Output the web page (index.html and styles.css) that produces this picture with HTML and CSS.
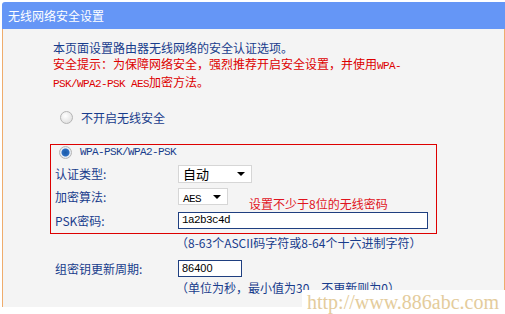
FILE: index.html
```html
<!DOCTYPE html>
<html>
<head>
	<title>无线网络安全设置</title>
	<meta charset="UTF-8">
	<link rel="stylesheet" href="styles.css">
</head>
<body>
	<div class="panel">
		<div class="title">无线网络安全设置</div>
		<div class="content">
			<p class="intro">本页面设置路由器无线网络的安全认证选项。</p>
			<p class="warn">安全提示：为保障网络安全，强烈推荐开启安全设置，并使用<span class="mono">WPA-</span><br><span class="mono">PSK/WPA2-PSK AES</span>加密方法。</p>

			<div class="radio-row off-row"><span class="radio"></span>不开启无线安全</div>

			<div class="wpa-box">
				<div class="radio-row wpa-row"><span class="radio on"></span><span class="mono">WPA-PSK/WPA2-PSK</span></div>
				<div class="field f1">
					<label>认证类型:</label>
					<span class="select sel-auth">自动<i class="caret"></i></span>
				</div>
				<div class="field f2">
					<label>加密算法:</label>
					<span class="select sel-aes"><span class="mono">AES</span><i class="caret"></i></span>
					<span class="hint">设置不少于8位的无线密码</span>
				</div>
				<div class="field f3">
					<label>PSK密码:</label>
					<span class="input psk mono">1a2b3c4d</span>
				</div>
			</div>

			<div class="note">（8-63个ASCII码字符或8-64个十六进制字符）</div>
			<div class="field group">
				<label>组密钥更新周期:</label>
				<span class="input period">86400</span>
			</div>
			<div class="note last">（单位为秒，最小值为30，不更新则为0）</div>
		</div>
	</div>
	<div class="watermark">http://www.886abc.com</div>
</body>
</html>
```

FILE: styles.css
```css
body {
	margin: 0;
	background-color: #fff;
	font-family: "Noto Sans CJK SC", "Liberation Sans", sans-serif;
	font-size: 12px;
	color: #183c8c;
}

.panel {
	width: 503px;
	margin-left: 2px;
	padding-top: 2px;
}

.title {
	height: 27px;
	line-height: 27px;
	padding-left: 6px;
	background-color: #6596f6;
	border-top-left-radius: 3px;
	color: #fff;
	font-size: 12px;
}

.content {
	background-color: #f4f4f4;
	border-left: 1px solid #efac6c;
	border-right: 1px solid #efac6c;
	padding: 11px 0 6px 50px;
}

p {
	margin: 0;
}

.intro {
	height: 15px;
	line-height: 15px;
}

.warn {
	height: 36px;
	line-height: 18px;
	color: #dd0000;
}

.mono {
	font-family: "Liberation Mono", monospace;
	font-size: 11px;
	letter-spacing: -0.6px;
	line-height: 1;
}

.radio-row {
	display: flex;
	align-items: center;
}

.off-row {
	height: 20px;
	margin-top: 16px;
	padding-left: 7px;
}

.radio {
	width: 11px;
	height: 11px;
	border: 1px solid #b4b4b4;
	border-radius: 50%;
	background: radial-gradient(circle at 40% 35%, #ffffff, #d8d8d8);
	margin-right: 8px;
	box-sizing: content-box;
}

.radio.on {
	background: radial-gradient(circle, #1b5aa6 0, #2a6cc0 3.5px, #e8eef6 4.5px, #d8d8d8 100%);
}

.wpa-box {
	width: 381px;
	margin: 17px 0 0 -3px;
	border: 1px solid #dd0000;
	padding-left: 4px;
	box-sizing: content-box;
}

.wpa-row {
	height: 15px;
	padding-left: 4px;
}

.field {
	display: flex;
	align-items: center;
}

.field label {
	width: 123px;
	flex: none;
}

.f1 {
	height: 23px;
	margin-top: 2px;
}

.f2 {
	height: 23px;
}

.f3 {
	height: 25px;
}

.select {
	position: relative;
	height: 18px;
	line-height: 16px;
	box-sizing: border-box;
	border: 1px solid #d6d6d6;
	background-color: #fff;
	color: #000;
	padding-left: 4px;
	font-size: 13px;
}

.sel-auth {
	width: 74px;
}

.sel-aes {
	width: 50px;
	height: 17px;
	line-height: 15px;
}

.caret {
	position: absolute;
	right: 6px;
	top: 6px;
	width: 0;
	height: 0;
	border-left: 4px solid transparent;
	border-right: 4px solid transparent;
	border-top: 4px solid #000;
}

.hint {
	align-self: flex-end;
	margin: 0 0 -3px 21px;
	line-height: 14px;
	color: #e0141e;
}

.input {
	height: 17px;
	line-height: 15px;
	box-sizing: border-box;
	border: 1px solid #1f3f80;
	background-color: #fff;
	color: #000;
	padding-left: 3px;
}

.psk {
	width: 250px;
}

.period {
	width: 64px;
	font-family: "Liberation Sans", sans-serif;
	font-size: 11px;
}

.note {
	height: 18px;
	line-height: 18px;
	padding-left: 123px;
}

.group {
	height: 18px;
	margin-top: 7px;
	padding-left: 2px;
}

.group label {
	width: 123px;
}

.note.last {
	height: 24px;
	line-height: 22px;
}

.watermark {
	position: absolute;
	left: 302px;
	top: 290px;
	width: 203px;
	height: 24px;
	background-color: #fff;
	padding-left: 5px;
	box-sizing: border-box;
	font-family: "Liberation Serif", serif;
	font-size: 20px;
	line-height: 24px;
	color: #e4cc9c;
}
```
